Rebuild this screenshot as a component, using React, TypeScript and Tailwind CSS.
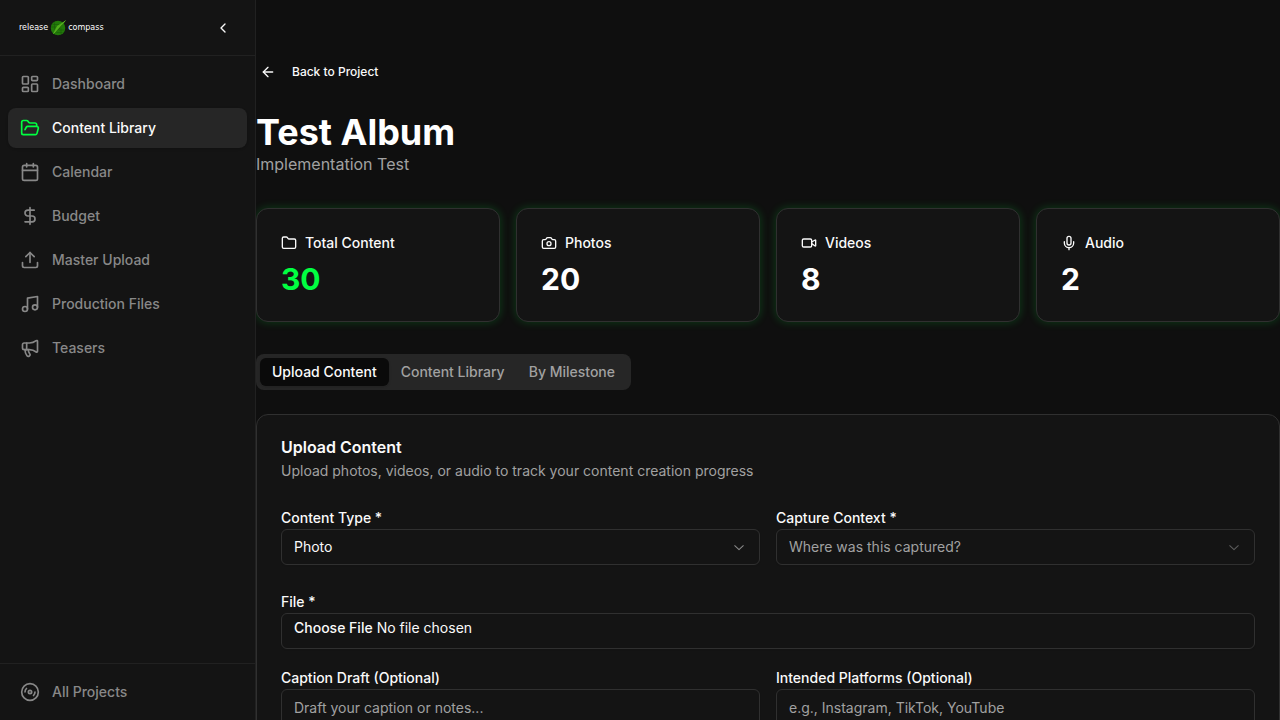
import type { ReactNode } from "react";
import {
  ArrowLeft,
  Calendar,
  Camera,
  ChevronLeft,
  Disc3,
  DollarSign,
  Folder,
  FolderOpen,
  LayoutDashboard,
  Megaphone,
  Mic,
  Music,
  Upload,
  Video,
} from "lucide-react";

const navItems = [
  { label: "Dashboard", icon: LayoutDashboard },
  { label: "Content Library", icon: FolderOpen, active: true },
  { label: "Calendar", icon: Calendar },
  { label: "Budget", icon: DollarSign },
  { label: "Master Upload", icon: Upload },
  { label: "Production Files", icon: Music },
  { label: "Teasers", icon: Megaphone },
];

const stats = [
  { label: "Total Content", value: 30, icon: Folder, accent: true },
  { label: "Photos", value: 20, icon: Camera },
  { label: "Videos", value: 8, icon: Video },
  { label: "Audio", value: 2, icon: Mic },
];

const tabs = ["Upload Content", "Content Library", "By Milestone"];

const fieldClass =
  "block w-full rounded-md border border-[#303030] bg-transparent px-3 text-sm shadow-xs outline-none placeholder:text-[#a1a1a1]";

function Logo() {
  return (
    <a href="#" aria-label="Release Compass" className="flex items-center gap-0.5 font-['DejaVu_Sans',sans-serif] text-[8px] leading-4 font-normal text-white">
      <span>release</span>
      <svg viewBox="0 0 32 32" className="size-4" aria-hidden="true">
        <circle cx="16" cy="16" r="14.5" fill="#227a0a" />
        <path d="M5 9h16M2 14h13M18 20h10M13 25h12M9 5v14M22 17v11" stroke="#185f08" strokeWidth="1.3" />
        <path d="M31 1 19 18 6 28 14 12Z" fill="#4fae1a" />
        <path d="M31 1 19 18 6 28Z" fill="#174f08" />
        <path d="M31 1 7 27" stroke="#68c928" strokeWidth="1.5" />
      </svg>
      <span>compass</span>
    </a>
  );
}

function Field({ id, label, children }: { id: string; label: string; children: ReactNode }) {
  return (
    <div>
      <label htmlFor={id} className="block pt-0.5 text-sm leading-[22px] font-medium">
        {label}
      </label>
      {children}
    </div>
  );
}

function SelectField({ id, label, options, muted }: { id: string; label: string; options: string[]; muted?: boolean }) {
  return (
    <Field id={id} label={label}>
      <div className="relative">
        <select id={id} className={`${fieldClass} h-9 appearance-none pr-9 ${muted ? "text-[#a1a1a1]" : "text-[#fafafa]"}`}>
          {options.map((option) => (
            <option key={option} className="bg-[#141414]">{option}</option>
          ))}
        </select>
        <svg
          viewBox="0 0 15 15"
          aria-hidden="true"
          className={`pointer-events-none absolute top-2.5 right-[13px] size-4 ${muted ? "text-[#5e5e5e]" : "text-[#8c8c8c]"}`}
        >
          <path d="M3.5 6.3 7.5 10 11.5 6.3" fill="none" stroke="currentColor" strokeWidth="1" strokeLinecap="round" strokeLinejoin="round" />
        </svg>
      </div>
    </Field>
  );
}

function Sidebar() {
  return (
    <aside className="flex w-64 shrink-0 flex-col border-r border-[#212121] bg-[#141414]">
      <div className="flex h-14 items-center justify-between border-b border-[#212121] pr-4 pl-[19px]">
        <Logo />
        <button type="button" aria-label="Collapse sidebar" className="flex size-8 items-center justify-center rounded-md text-[#fafafa]">
          <ChevronLeft className="size-4" />
        </button>
      </div>
      <nav className="flex flex-1 flex-col gap-1 p-2">
        {navItems.map(({ label, icon: Icon, active }) => (
          <a
            key={label}
            href="#"
            aria-current={active ? "page" : undefined}
            className={`flex h-10 items-center gap-3 rounded-lg px-3 text-sm font-medium ${active ? "bg-[#262626] text-[#fafafa] shadow-sm" : "text-[#888888]"}`}
          >
            <Icon className={`size-5 ${active ? "text-[#00ff41]" : ""}`} />
            {label}
          </a>
        ))}
      </nav>
      <div className="border-t border-[#212121] p-2">
        <a href="#" className="flex h-10 items-center gap-3 rounded-lg px-3 text-sm font-medium text-[#888888]">
          <Disc3 className="size-5" />
          All Projects
        </a>
      </div>
    </aside>
  );
}

export default function App() {
  return (
    <div className="flex h-screen overflow-hidden bg-[#0f0f0f] font-['Inter',sans-serif] text-[#fafafa]">
      <Sidebar />
      <main className="min-w-0 flex-1 overflow-y-auto pt-14 [scrollbar-width:none]">
        <a href="#" className="inline-flex h-8 items-center gap-4 px-1 text-xs font-medium">
          <ArrowLeft className="size-4" />
          Back to Project
        </a>
        <header className="mt-6">
          <h1 className="text-4xl font-bold text-white">Test Album</h1>
          <p className="text-base text-[#a1a1a1]">Implementation Test</p>
        </header>

        <section className="mt-8 grid grid-cols-4 gap-4">
          {stats.map(({ label, value, icon: Icon, accent }) => (
            <article key={label} className="flex flex-col gap-2 rounded-xl border border-[#303030] bg-[#141414] p-6 shadow-[0_0_10px_rgba(0,255,65,0.2)]">
              <h2 className="flex items-center gap-2 text-sm font-medium">
                <Icon className="size-4" />
                {label}
              </h2>
              <p className={`text-3xl font-bold ${accent ? "text-[#00ff41]" : "text-white"}`}>{value}</p>
            </article>
          ))}
        </section>

        <div role="tablist" className="mt-8 inline-flex h-9 rounded-lg bg-[#262626] p-1">
          {tabs.map((tab, index) => (
            <button
              key={tab}
              type="button"
              role="tab"
              aria-selected={index === 0}
              className={`rounded-md px-3 text-sm font-medium ${index === 0 ? "bg-[#0a0a0a] text-[#fafafa] shadow-sm" : "text-[#a1a1a1]"}`}
            >
              {tab}
            </button>
          ))}
        </div>

        <section className="mt-6 rounded-xl border border-[#303030] bg-[#141414] p-6">
          <h2 className="text-base leading-4 font-semibold">Upload Content</h2>
          <p className="mt-1.5 text-sm text-[#a1a1a1]">Upload photos, videos, or audio to track your content creation progress</p>
          <form className="mt-6">
            <div className="grid grid-cols-2 gap-4">
              <SelectField id="content-type" label="Content Type *" options={["Photo", "Video", "Audio"]} />
              <SelectField id="capture-context" label="Capture Context *" options={["Where was this captured?"]} muted />
            </div>
            <div className="mt-6">
              <Field id="file" label="File *">
                <input id="file" type="file" className={`${fieldClass} h-9 py-1 file:mr-1 file:h-5 file:border-0 file:bg-transparent file:text-sm file:font-medium`} />
              </Field>
            </div>
            <div className="mt-4 grid grid-cols-2 gap-4">
              <Field id="caption" label="Caption Draft (Optional)">
                <textarea id="caption" placeholder="Draft your caption or notes..." className={`${fieldClass} h-16 resize-none py-2`} />
              </Field>
              <Field id="platforms" label="Intended Platforms (Optional)">
                <textarea id="platforms" placeholder="e.g., Instagram, TikTok, YouTube" className={`${fieldClass} h-16 resize-none py-2`} />
              </Field>
            </div>
          </form>
        </section>
      </main>
    </div>
  );
}
